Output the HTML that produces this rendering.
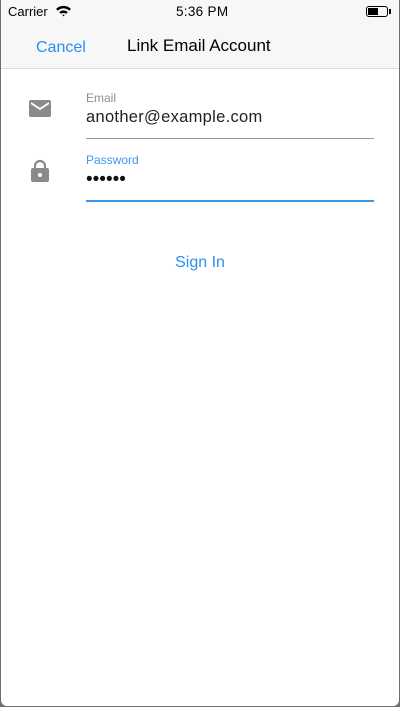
<!DOCTYPE html>
<html><head><meta charset="utf-8"><style>
*{margin:0;padding:0;box-sizing:border-box}
body{width:400px;height:707px;background:#6b7080;font-family:"Liberation Sans",sans-serif;position:relative;overflow:hidden}
.page{position:absolute;left:1px;top:0;width:398px;height:706px;background:#fff;border-radius:0 0 6px 6px;overflow:hidden}
.nav{position:absolute;left:0;top:0;width:100%;height:69px;background:#f7f7f7;border-bottom:1px solid #dcdcdc}
.t{position:absolute;white-space:nowrap}
</style></head><body><div class="page">
<div class="nav"></div>
<div class="t" style="left:7px;top:4px;font-size:13px;color:#000">Carrier</div>
<svg class="t" style="left:54px;top:4px" width="17" height="13" viewBox="0 0 16 12"><path d="M1 4.5 A10 10 0 0 1 15 4.5 L13.3 6.2 A7.6 7.6 0 0 0 2.7 6.2 Z M4 7.6 A5.6 5.6 0 0 1 12 7.6 L10.3 9.2 A3.2 3.2 0 0 0 5.7 9.2 Z M6.9 10.3 A1.6 1.6 0 0 1 9.1 10.3 L8 11.5 Z" fill="#000"/></svg>
<div class="t" style="left:175px;top:4px;font-size:13.5px;color:#000;letter-spacing:0.3px">5:36 PM</div>
<div class="t" style="left:365px;top:6px;width:22px;height:11px;border:1px solid #000;border-radius:3px"><div style="position:absolute;left:1px;top:1px;width:10px;height:7px;background:#000"></div></div>
<div class="t" style="left:388px;top:9px;width:2px;height:5px;background:#000"></div>
<div class="t" style="left:35px;top:39px;font-size:16px;color:#2f8ef2">Cancel</div>
<div class="t" style="left:126px;top:36px;font-size:17px;color:#000;font-weight:500">Link Email Account</div>
<svg class="t" style="left:27px;top:99px" width="24" height="19" viewBox="0 0 24 19"><rect x="1" y="1" width="22" height="17" rx="2" fill="#8a8a8a"/><path d="M3 4 L12 10 L21 4" stroke="#fff" stroke-width="1.8" fill="none"/></svg>
<svg class="t" style="left:29px;top:159px" width="20" height="24" viewBox="0 0 20 24"><path d="M5 10 V7 A5 5 0 0 1 15 7 V10" stroke="#8a8a8a" stroke-width="2.2" fill="none"/><rect x="1" y="9" width="18" height="14" rx="2" fill="#8a8a8a"/><circle cx="10" cy="16" r="2" fill="#fff"/></svg>
<div class="t" style="left:85px;top:91px;font-size:12px;color:#8e8e8e">Email</div>
<div class="t" style="left:85px;top:108px;font-size:16.5px;color:#222;letter-spacing:0.3px">another@example.com</div>
<div class="t" style="left:85px;top:138px;width:288px;height:1px;background:#9a9a9a"></div>
<div class="t" style="left:85px;top:153px;font-size:12px;color:#3f97ee">Password</div>
<div class="t" style="left:85px;top:169px;font-size:19px;color:#111;letter-spacing:0px">••••••</div>
<div class="t" style="left:85px;top:200px;width:288px;height:2px;background:#3d95ec"></div>
<div class="t" style="left:0;width:398px;text-align:center;top:254px;font-size:16px;color:#2f8ef2">Sign In</div>
</div></body></html>
